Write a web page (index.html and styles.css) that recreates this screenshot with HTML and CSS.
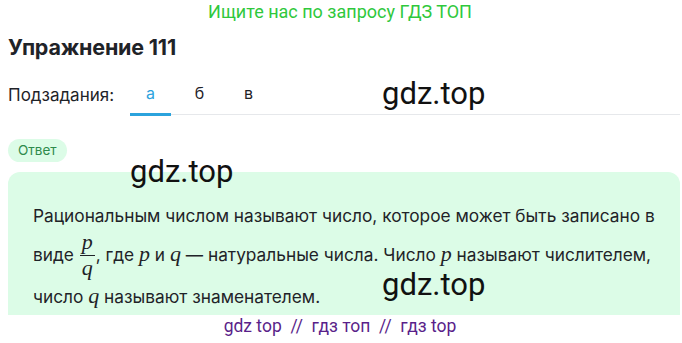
FILE: index.html
```html
<!DOCTYPE html>
<html lang="ru">
<head>
  <meta charset="UTF-8" />
  <meta name="viewport" content="width=device-width, initial-scale=1.0"/>
  <title>Упражнение 111</title>
  <link rel="stylesheet" href="styles.css">
</head>
<body>
  <div class="search-hint">Ищите нас по запросу ГДЗ ТОП</div>

  <h1>Упражнение 111</h1>

  <!-- Subtasks tabs -->
  <div class="subtasks">
    <span class="subtasks-label">Подзадания:</span>
    <div class="tabs">
      <span class="tab active">а</span>
      <span class="tab">б</span>
      <span class="tab">в</span>
    </div>
  </div>

  <div class="badge">Ответ</div>

  <!-- Answer card -->
  <div class="answer">
    <p>
      Рациональным числом называют число, которое может быть записано в<br>
      виде <span class="frac"><span class="var num">p</span><span class="var den">q</span></span>, где <span class="var">p</span> и <span class="var">q</span> — натуральные числа. Число <span class="var">p</span> называют числителем,<br>
      число <span class="var">q</span> называют знаменателем.
    </p>
  </div>

  <div class="footer-mark">gdz top &nbsp;//&nbsp; гдз топ &nbsp;//&nbsp; гдз top</div>

  <!-- watermarks -->
  <span class="watermark wm-1">gdz.top</span>
  <span class="watermark wm-2">gdz.top</span>
  <span class="watermark wm-3">gdz.top</span>
</body>
</html>
```

FILE: styles.css
```css
:root {
  --text-color: #1f2328;
  --hint-green: #2fc83c;
  --mint: #dcfce7;
  --badge-text: #2e8a4c;
  --tab-blue: #2ba3dd;
  --line-grey: #e6e8eb;
  --purple: #5a1f8a;
}

body {
  margin: 0;
  padding: 0 2px 0 8px;
  font-family: "Inter", "Noto Sans", sans-serif;
  color: var(--text-color);
  background: white;
  position: relative;
  height: 343px;
  overflow: hidden;
}

.search-hint {
  text-align: center;
  color: var(--hint-green);
  font-family: "Roboto", sans-serif;
  font-size: 18px;
  line-height: 24px;
  margin-left: -8px;
}

h1 {
  font-size: 21.5px;
  font-weight: 700;
  margin: 9px 0 0;
  line-height: 28px;
  letter-spacing: -0.2px;
}

.subtasks {
  display: flex;
  align-items: flex-end;
  margin-top: 22px;
}

.subtasks-label {
  font-size: 17px;
  line-height: 20px;
  padding-bottom: 10px;
}

.tabs {
  display: flex;
  gap: 8px;
  margin-left: 16px;
  flex: 1;
  border-bottom: 1px solid var(--line-grey);
}

.tab {
  width: 41px;
  text-align: center;
  font-size: 16px;
  line-height: 20px;
  padding-bottom: 10px;
  border-bottom: 3px solid transparent;
  margin-bottom: -2px;
}

.tab.active {
  color: var(--tab-blue);
  border-bottom-color: var(--tab-blue);
}

.badge {
  display: inline-block;
  margin-top: 24px;
  padding: 3px 10px;
  background: var(--mint);
  color: var(--badge-text);
  font-size: 13.5px;
  line-height: 17px;
  border-radius: 12px;
}

.answer {
  margin-top: 10px;
  background: var(--mint);
  border-radius: 12px 12px 0 0;
  padding: 26px 20px 0 25px;
  height: 117px;
}

.answer p {
  margin: 0;
  font-size: 17.3px;
  line-height: 36px;
}

.var {
  font-family: "Liberation Serif", "DejaVu Serif", serif;
  font-style: italic;
  font-size: 22px;
}

.frac {
  display: inline-flex;
  flex-direction: column;
  align-items: center;
  vertical-align: middle;
  margin: -2px 1px 0;
}

.frac .var {
  font-size: 22px;
  line-height: 20px;
  padding: 0 2px;
}

.frac .num {
  padding-bottom: 3px;
}

.frac .den {
  border-top: 1px solid var(--text-color);
  padding-top: 2px;
}

.footer-mark {
  text-align: center;
  color: var(--purple);
  font-family: "Roboto", sans-serif;
  font-size: 17.5px;
  line-height: 22px;
  margin-left: -8px;
  margin-top: 0;
}

.watermark {
  position: absolute;
  font-family: "Roboto", sans-serif;
  font-size: 31px;
  color: #111;
  line-height: 1;
}

.wm-1 { left: 382px; top: 78px; }
.wm-2 { left: 130px; top: 156px; }
.wm-3 { left: 382px; top: 269px; }
```
